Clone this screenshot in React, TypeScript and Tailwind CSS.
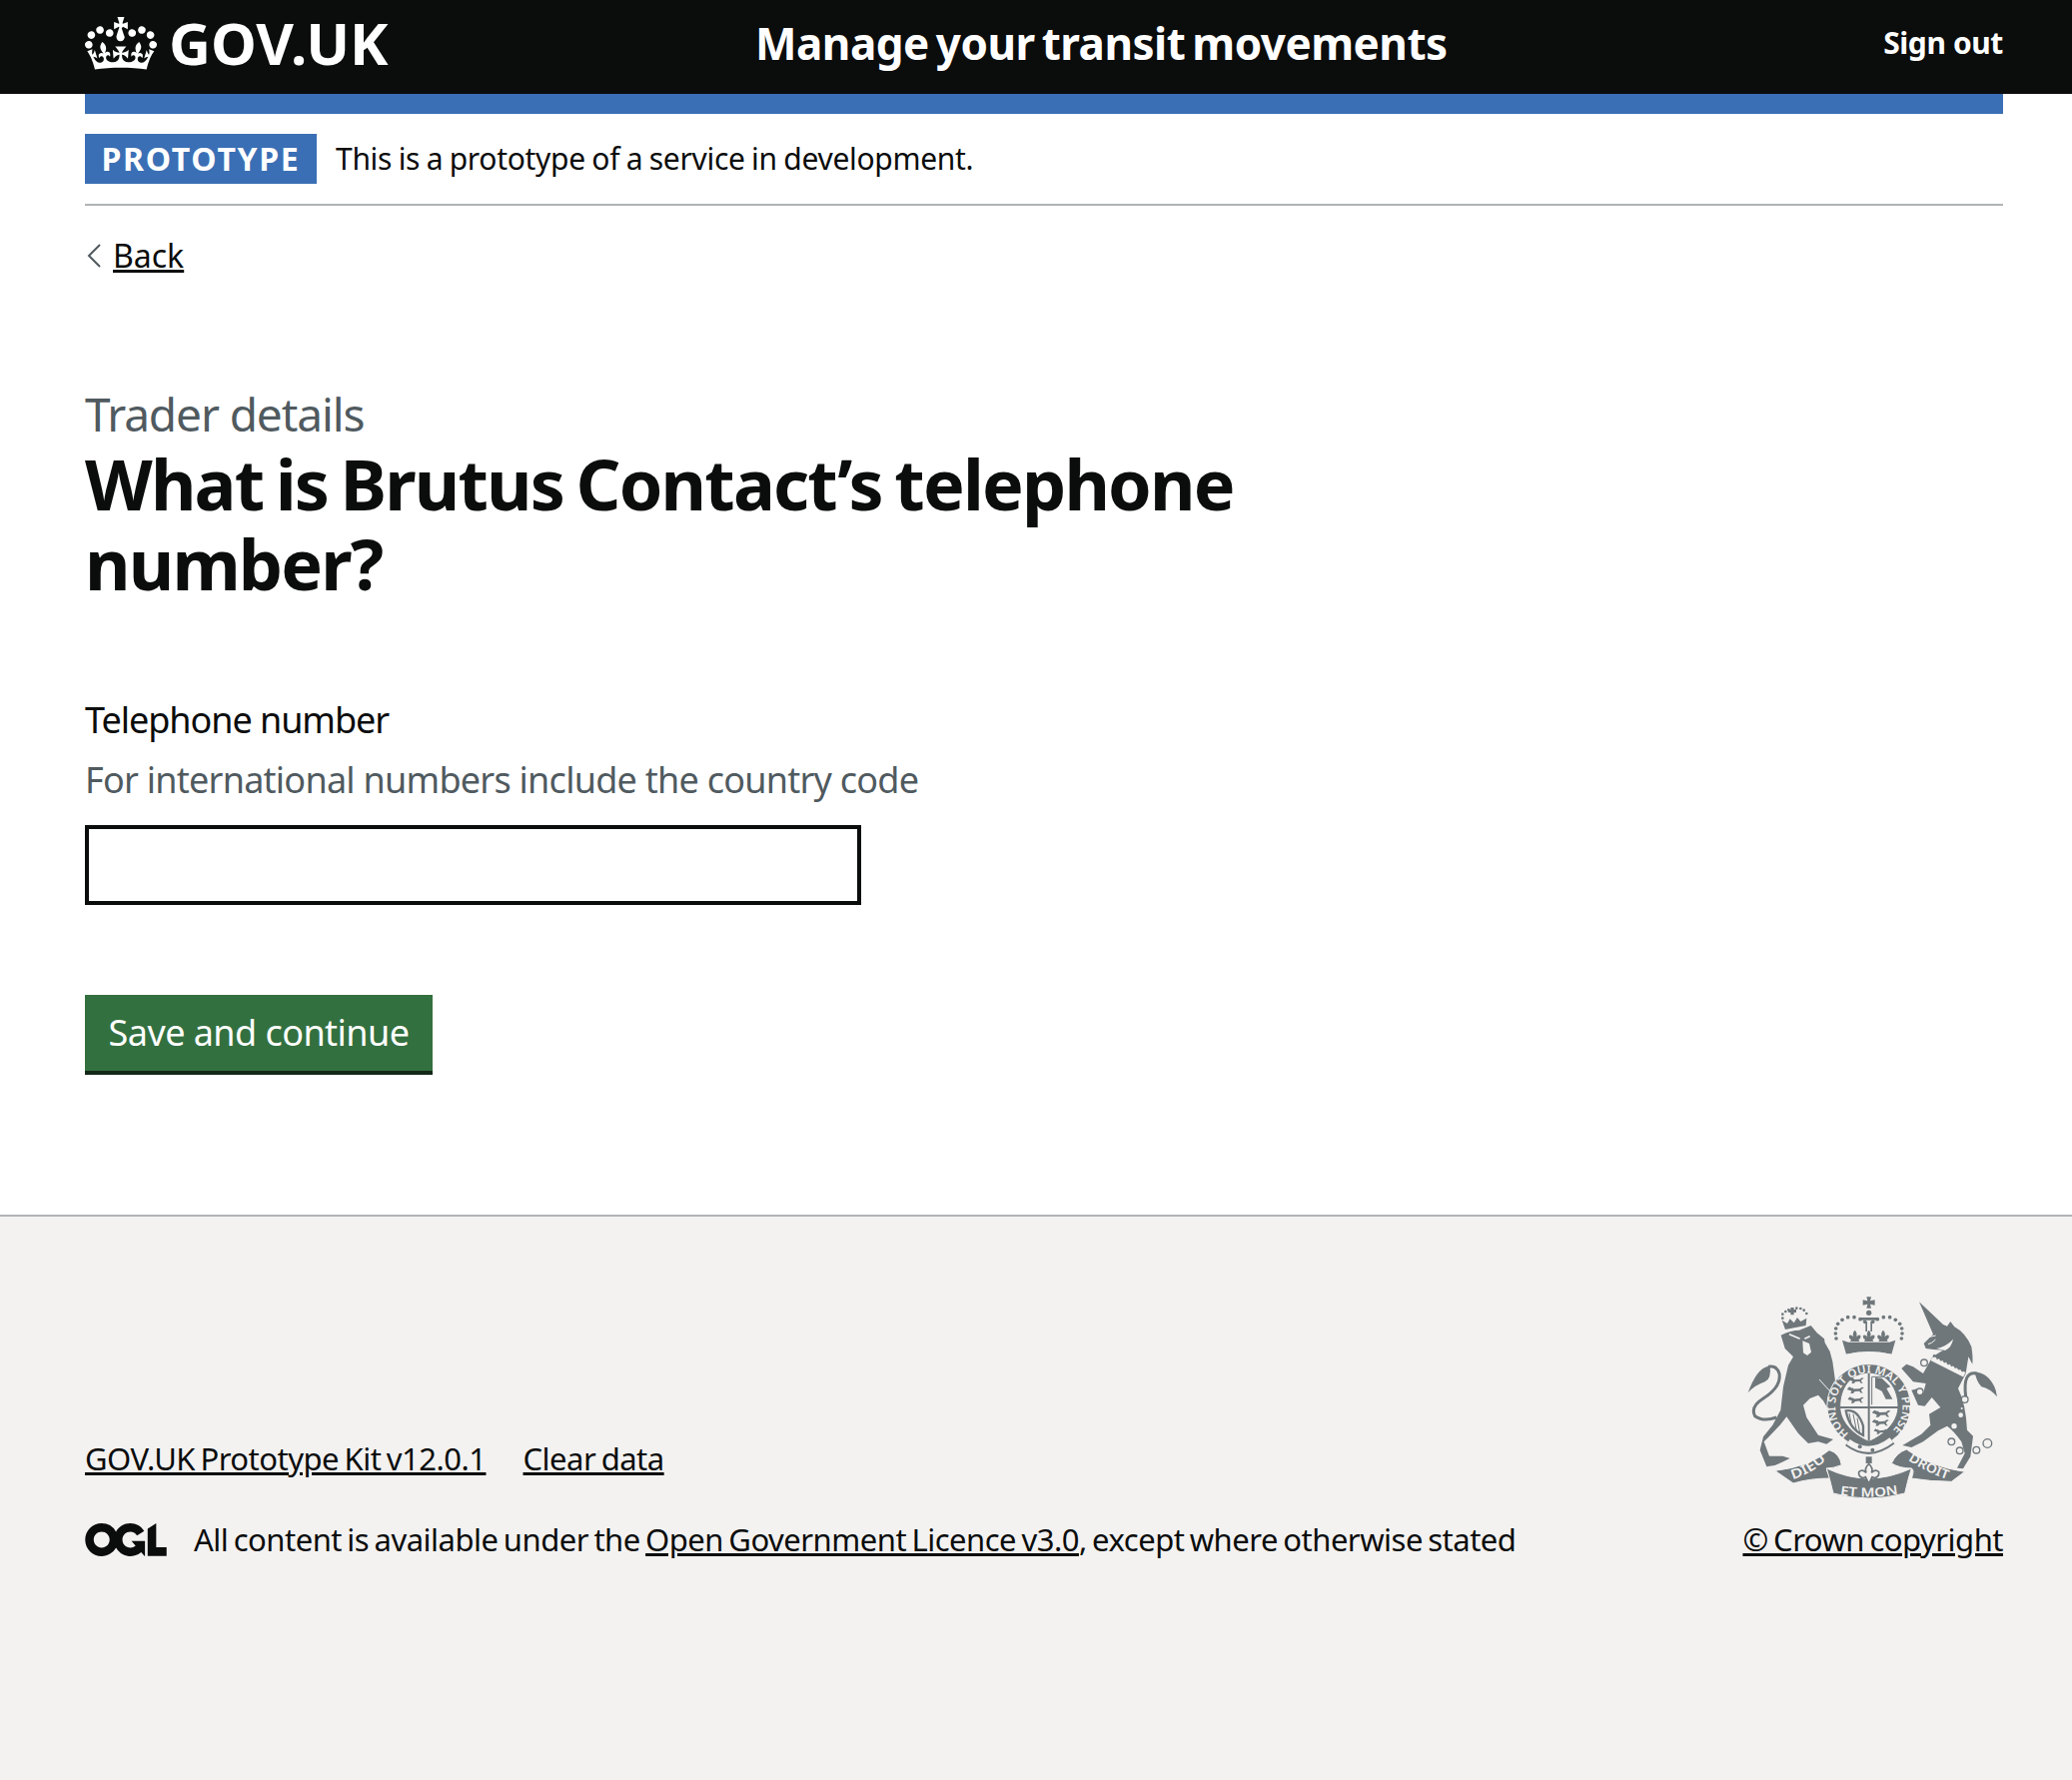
const sans = "font-['Noto_Sans',sans-serif]";

export default function App() {
  return (
    <div className={`${sans} min-h-[1782px] flex flex-col bg-white text-[#0b0c0c]`}>
      <header className="bg-[#0b0c0c] text-white h-[94px] pl-[85px] pr-[69px] pb-[8px] flex items-center justify-between">
        <div className="flex items-center gap-[12px] w-[671px]">
          <Crown />
          <span className="font-bold text-[58px] leading-none">GOV.UK</span>
        </div>
        <div className="flex-1 flex items-center justify-between">
          <span className="font-bold text-[44px] tracking-[-0.5px] [word-spacing:-4px]">Manage your transit movements</span>
          <span className="font-bold text-[30px] tracking-[-0.4px] pb-[2px]">Sign out</span>
        </div>
      </header>
      <div className="ml-[85px] mr-[69px]">
        <div className="h-[20px] bg-[#3a6fb5]" />
        <div className="flex items-start gap-[19px] h-[92px] border-b-2 border-[#b1b4b6] pt-[20px]">
          <span className="bg-[#3a6fb5] text-white font-bold text-[32px] tracking-[1.7px] h-[50px] w-[232px] flex items-center justify-center">PROTOTYPE</span>
          <span className="text-[30px] leading-[50px] tracking-[-0.3px] [word-spacing:-1px]">This is a prototype of a service in development.</span>
        </div>
        <div className="flex items-center mt-[30px] text-[32px] leading-[40px]">
          <svg width="14" height="24" viewBox="0 0 14 24" className="ml-[2px] mr-[12px]"><path d="M13 1 L2 12 L13 23" fill="none" stroke="#505a5f" strokeWidth="2" /></svg>
          <a className="underline">Back</a>
        </div>
        <p className="text-[#505a5f] text-[46px] leading-[50px] tracking-[-1.1px] mt-[113px]">Trader details</p>
        <h1 className="font-bold text-[70px] leading-[80px] tracking-[-1.8px] [word-spacing:-4px] w-[1250px] mt-[5px]">What is Brutus Contact’s telephone number?</h1>
        <p className="text-[36px] leading-[46px] tracking-[-1.05px] mt-[94px]">Telephone number</p>
        <p className="text-[#505a5f] text-[36px] leading-[46px] tracking-[-0.75px] mt-[14px]">For international numbers include the country code</p>
        <input className="block w-[777px] h-[80px] border-[4px] border-[#0b0c0c] mt-[22px]" />
        <button className="block mt-[90px] w-[348px] h-[80px] bg-[#33703f] border-b-[4px] border-[#12291a] text-white text-[36px] tracking-[-0.55px]">Save and continue</button>
      </div>
      <footer className="flex-1 mt-[140px] bg-[#f3f2f1] border-t-2 border-[#b1b4b6] pl-[85px] pr-[69px] pt-[77px] pb-[221px] flex items-end justify-between text-[31px] leading-[40px] tracking-[-0.5px] [word-spacing:-2.2px]">
        <div>
          <div className="flex gap-[37px]"><a className="underline">GOV.UK Prototype Kit v12.0.1</a><a className="underline">Clear data</a></div>
          <div className="flex items-center gap-[27px] mt-[41px]">
            <Ogl />
            <span>All content is available under the <a className="underline">Open Government Licence v3.0</a>, except where otherwise stated</span>
          </div>
        </div>
        <div className="flex flex-col items-center">
          <Crest />
          <a className="underline mt-[16px]">© Crown copyright</a>
        </div>
      </footer>
    </div>
  );
}

function Crown() {
  return (
    <svg viewBox="0 0 132 97" className="w-[72px] h-[53px]">
      <path fill="currentColor" fillRule="evenodd" d="M25 30.2c3.5 1.5 7.7-.2 9.1-3.7 1.5-3.6-.2-7.8-3.9-9.2-3.6-1.4-7.6.3-9.1 3.9-1.4 3.5.3 7.5 3.9 9zM9 39.5c3.6 1.5 7.8-.2 9.2-3.7 1.5-3.6-.2-7.8-3.9-9.1-3.6-1.5-7.6.2-9.1 3.8-1.4 3.5.3 7.5 3.8 9zM4.4 57.2c3.5 1.5 7.7-.2 9.1-3.8 1.5-3.6-.2-7.7-3.9-9.1-3.5-1.5-7.6.3-9.1 3.8-1.4 3.5.3 7.6 3.9 9.1zm38.3-21.4c3.5 1.5 7.7-.2 9.1-3.8 1.5-3.6-.2-7.7-3.9-9.1-3.6-1.5-7.6.3-9.1 3.8-1.3 3.6.4 7.7 3.9 9.1zm64.4-5.6c-3.6 1.5-7.8-.2-9.1-3.7-1.5-3.6.2-7.8 3.8-9.2 3.6-1.4 7.7.3 9.2 3.9 1.3 3.5-.4 7.5-3.9 9zm15.9 9.3c-3.6 1.5-7.7-.2-9.1-3.7-1.5-3.6.2-7.8 3.7-9.1 3.6-1.5 7.7.2 9.2 3.8 1.5 3.5-.3 7.5-3.8 9zm4.7 17.7c-3.6 1.5-7.8-.2-9.2-3.8-1.5-3.6.2-7.7 3.9-9.1 3.6-1.5 7.7.3 9.2 3.8 1.3 3.5-.4 7.6-3.9 9.1zM89.3 35.8c-3.6 1.5-7.8-.2-9.2-3.8-1.4-3.6.2-7.7 3.9-9.1 3.6-1.5 7.7.3 9.2 3.8 1.4 3.6-.3 7.7-3.9 9.1zM69.7 17.7l8.9 4.7V9.3l-8.9 2.8c-.2-.3-.5-.6-.9-.9L72.4 0H59.6l3.5 11.2c-.3.3-.6.5-.9.9l-8.8-2.8v13.1l8.8-4.7c.3.3.6.7.9.9l-5 15.4v.1c-.2.8-.4 1.6-.4 2.4 0 4.1 3.1 7.5 7 8.1h1.2c3.9-.6 7-4 7-8.1 0-.8-.1-1.6-.4-2.4V36l-5.1-15.4c.4-.2.7-.6 1-.9zM66 92.8c16.9 0 32.8 1.1 47.1 3.2 4-16.9 8.9-26.7 14-33.5l-9.6-3.4c1 4.9 1.1 7.2 0 10.2-1.5-1.4-3-4.3-4.2-8.7L108.6 76c2.8-2 5-3.2 7.5-3.3-4.4 9.4-10 11.9-13.6 11.2-4.3-.8-6.3-4.6-5.6-7.9 1-4.7 5.7-5.9 8-.5 4.3-8.7-3-11.4-7.6-8.8 7.1-7.2 7.9-13.5 2.1-21.1-8 6.1-8.1 12.3-4.5 20.8-4.7-5.4-12.1-2.5-9.5 6.2 3.4-5.2 7.9-2 7.2 3.1-.6 4.3-6.4 7.8-13.5 7.2-10.3-.9-10.9-8-11.2-13.8 2.5-.5 7.1 1.8 11 7.3L80.2 60c-4.1 4.4-8 5.3-12.3 5.4 1.4-4.4 8-11.6 8-11.6H55.5s6.4 7.2 7.9 11.6c-4.2-.1-8-1-12.3-5.4l1.4 16.4c3.9-5.5 8.5-7.7 10.9-7.3-.3 5.8-.9 12.8-11.1 13.8-7.2.6-12.9-2.9-13.5-7.2-.7-5 3.8-8.3 7.1-3.1 2.7-8.7-4.6-11.6-9.4-6.2 3.7-8.5 3.6-14.7-4.6-20.8-5.8 7.6-5 13.9 2.2 21.1-4.7-2.6-11.9.1-7.7 8.8 2.3-5.5 7.1-4.2 8.1.5.7 3.3-1.3 7.1-5.7 7.9-3.5.7-9-1.8-13.5-11.2 2.5.1 4.7 1.3 7.5 3.3l-4.7-15.4c-1.2 4.4-2.7 7.2-4.3 8.7-1.1-3-.9-5.3 0-10.2l-9.5 3.4c5 6.9 9.9 16.7 14 33.5 14.8-2.1 30.8-3.2 47.7-3.2z" />
    </svg>
  );
}

function Ogl() {
  return (
    <svg viewBox="0 0 483.2 195.7" className="w-[82px] h-[33px]">
      <path fill="currentColor" d="M421.5 142.8V.1l-50.7 32.3v161.1h112.4v-50.7zm-122.3-9.6A47.12 47.12 0 0 1 221 97.8c0-26 21.1-47.1 47.1-47.1 16.7 0 31.4 8.7 39.7 21.8l42.7-27.2A97.63 97.63 0 0 0 268.1 0c-36.5 0-68.3 20.1-85.1 49.7A98 98 0 0 0 97.8 0C43.9 0 0 43.9 0 97.8s43.9 97.8 97.8 97.8c36.5 0 68.3-20.1 85.1-49.7a97.76 97.76 0 0 0 149.6 25.4l19.4 22.2h3v-87.8h-80l24.3 27.5zM97.8 145c-26 0-47.1-21.1-47.1-47.1s21.1-47.1 47.1-47.1 47.2 21 47.2 47S123.8 145 97.8 145" />
    </svg>
  );
}

const ink = "#6f777b";
const bg = "#f3f2f1";

function LionPassant({ x, y, s = 1 }: { x: number; y: number; s?: number }) {
  return (
    <path
      transform={`translate(${x} ${y}) scale(${s})`}
      fill={ink}
      d="M0 6l6-6 5 3 4 0 3 3 16-1 6-4 6 1-4 3-4 3 1 5 4 4h-6l-4-5-12 1-5 5h-7l3-6-6-3-5-1z"
    />
  );
}

function Fleur({ x, y }: { x: number; y: number }) {
  return (
    <path
      transform={`translate(${x} ${y})`}
      fill={ink}
      d="M0-22q9 9 4 20 8-8 13-4 2 9-6 12l3 6h-28l3-6q-8-3-6-12 5-4 13 4-5-11 4-20z"
    />
  );
}

// royal arms, hand drawn: coordinates are 3x the on-page pixels
function Crest() {
  const dotsL = [[279, 135], [277, 120], [278, 105], [284, 91], [297, 79], [314, 71], [333, 71], [351, 77], [365, 85]];
  const dotsR = dotsL.map(([x, y]) => [754 - x, y]);
  const lionDots = [[118, 74], [118, 62], [127, 54], [136, 49], [160, 44], [172, 45], [182, 50], [190, 60]];
  const chain = [[543, 208, 10], [530, 295, 10], [665, 318, 10], [625, 445, 10], [650, 472, 10], [700, 470, 10], [733, 450, 13]];
  return (
    <svg viewBox="0 0 780 630" className="w-[260px] h-[210px]" style={{ letterSpacing: 0, wordSpacing: 0 }}>
      {/* royal crown */}
      <path fill={ink} d="M370 10h14l-3 12 14-3v16l-14-3 3 12h-14l3-12-14 3V19l14 3z" />
      <circle cx="377" cy="58" r="8" fill={ink} />
      {[...dotsL, ...dotsR].map(([x, y]) => <circle key={`${x}-${y}`} cx={x} cy={y} r="5.5" fill={ink} />)}
      <path fill={ink} d="M352 72h50v8h-50zM367 84h5v30h-5zM382 84h5v30h-5z" />
      <Fleur x={335} y={132} />
      <Fleur x={377} y={132} />
      <Fleur x={420} y={132} />
      <path fill={ink} d="M297 140l18 6 124 0 18-6-12 42q-68-14-136 0z" />
      {/* lion */}
      <path fill={ink} d="M113 125Q143 110 168 110L203 96L221 118L243 136L245 148L260 174L268 204L276 262L290 342L275 358L255 348L240 322L225 305L200 315L180 335L190 372L225 425L270 438L250 452L225 445L195 450L165 420L130 370L110 395L75 432L62 445L78 488L118 488L140 495L120 505L95 516L70 520L50 470L60 430L88 395L112 350L120 280L135 215L150 190L125 165Z" />
      <path fill="none" stroke={bg} strokeWidth="3" d="M228 258l42 46" />
      <path fill="none" stroke={bg} strokeWidth="5" d="M138 122l32 14M200 128l-16 8" />
      <path fill={bg} d="M178 142l20 8 6 26-12 10-12-8z" />
      <path fill="none" stroke={ink} strokeWidth="9" d="M100 372q-40 14-65-4-15-28 25-53 55-35 48-75-8-25-33-20" />
      <path fill={ink} d="M75 218q-35 7-61 80 21-23 51-33 20-10 15-47z" />
      {/* lion's crown */}
      <path fill={ink} d="M142 42h10v6h7v9h-7v7h-10v-7h-7v-9h7zM126 108l-10-28 16 10 8-14 12 12 10-16 10 12 18-10-2 22z" />
      {lionDots.map(([x, y]) => <circle key={`${x}-${y}`} cx={x} cy={y} r="4" fill={ink} />)}
      {/* garter */}
      <circle cx="377" cy="337" r="127" fill={bg} />
      <circle cx="377" cy="337" r="124" fill={ink} />
      <path fill={bg} d="M303 196q-4-10 6-14 68-16 136 0 10 4 6 14l-4 16q-70-20-140 0z" />
      <path fill={bg} stroke={ink} strokeWidth="3" d="M377 238c-57 0-87 47-87 102 0 45 40 85 87 105 47-20 88-60 88-105 0-55-31-102-88-102z" />
      <path stroke={ink} strokeWidth="6" d="M377 238v205M290 342h175" />
      <LionPassant x={316} y={252} />
      <LionPassant x={312} y={280} s={1.1} />
      <LionPassant x={314} y={310} s={1.05} />
      <path fill={ink} d="M396 252l20 2 26 26-12 5 18 32h-20l-12-24-20-10z" />
      <path fill="none" stroke={ink} strokeWidth="3" d="M386 250h66M386 250v84" />
      <LionPassant x={387} y={350} s={1.2} />
      <LionPassant x={387} y={378} s={1.1} />
      <LionPassant x={392} y={406} s={0.9} />
      <path fill="none" stroke={ink} strokeWidth="7" d="M308 352q36-6 52 46v28q-42-20-52-74z" />
      <path stroke={ink} strokeWidth="3" d="M318 360l8 42M330 362l10 50M342 374l8 46" />
      <path id="garter" fill="none" d="M317 421A101 101 0 1 1 437 421" />
      <text fill={bg} fontSize="33" fontWeight="600"><textPath href="#garter" textLength="490" lengthAdjust="spacingAndGlyphs">HONI SOIT QUI MAL Y PENSE</textPath></text>
      <path fill="none" stroke={ink} strokeWidth="30" d="M315 445Q378 492 445 440" />
      <path fill="none" stroke={bg} strokeWidth="18" d="M315 445Q378 492 445 440" />
      <circle cx="350" cy="460" r="6" fill={ink} /><circle cx="388" cy="470" r="6" fill={ink} />
      {/* unicorn */}
      <path fill={ink} d="M528 25L600 93l12 5 10-14 12 16q34 18 51 60 5 30 3 52l-12-22-8 50-23 45q23 45 27 125l18 18-8 62-22 36-18-2 23-44-10-35q-25-35-43-47l-27 14-45 33-35 17-27-6 57-34 27-27-4-33 34-20-26-30-21 26-20-3-20-45 20-5 15 15 8-30-38-5-35-40 15-13 20 8 30 20 28-50 32-20-30-2-22-3-6-15 28-28z" />
      <path fill="none" stroke={bg} strokeWidth="3" d="M555 152q12-2 22-14M560 130l18-4" />
      <path fill={bg} d="M580 165q30-6 50-28-4 24-24 34z" />
      <path fill="none" stroke={bg} strokeWidth="15" d="M566 194l98 50" />
      <path fill="none" stroke={ink} strokeWidth="9" strokeDasharray="6 6" d="M570 186l92 46" />
      {[[653, 365, 7], [633, 398, 8], [656, 345, 3]].map(([x, y, r]) => <circle key={`${x}-${y}`} cx={x} cy={y} r={r} fill={bg} />)}
      {chain.map(([x, y, r]) => <circle key={`${x}-${y}`} cx={x} cy={y} r={r} fill={bg} stroke={ink} strokeWidth="4" />)}
      <path fill="none" stroke={ink} strokeWidth="9" d="M668 310q-10-78 32-70" />
      <path fill={ink} d="M695 235q45 5 63 55l4 20q-22-25-47-30-15-15-20-45z" />
      {/* motto */}
      <path fill={ink} stroke={bg} strokeWidth="3" d="M95 532q105-12 163-62 32 10 37 45-25 10-45 10 0 10 12 30-62 0-112 15z" />
      <path fill={ink} stroke={bg} strokeWidth="3" d="M445 510q15-32 45-42 70 52 175 67l-40 30q-60 0-120-10 10-25 0-30-35 0-60-15z" />
      <path fill={ink} stroke={bg} strokeWidth="3" d="M250 525q125 60 255 0-10 30-20 75-110 30-215 0-8-35-20-75z" />
      <path id="motto-left" fill="none" d="M148 558q60-18 104-62" />
      <path id="motto-mid" fill="none" d="M290 604q88 14 178-2" />
      <path id="motto-right" fill="none" d="M494 500q58 38 118 58" />
      <text fill={bg} fontSize="40" fontWeight="600"><textPath href="#motto-left" textLength="118" lengthAdjust="spacingAndGlyphs">DIEU</textPath></text>
      <text fill={bg} fontSize="38" fontWeight="600"><textPath href="#motto-mid" textLength="176" lengthAdjust="spacingAndGlyphs">ET MON</textPath></text>
      <text fill={bg} fontSize="38" fontWeight="600"><textPath href="#motto-right" textLength="132" lengthAdjust="spacingAndGlyphs">DROIT</textPath></text>
      <path fill={bg} stroke={ink} strokeWidth="5" d="M377 512q14 12 8 26 12-12 22-2 2 14-12 18l-8-3-10 20-10-20-8 3q-14-4-12-18 10-10 22 2-6-14 8-26z" />
      <path fill={ink} d="M368 490h18v20h-18z" />
    </svg>
  );
}
